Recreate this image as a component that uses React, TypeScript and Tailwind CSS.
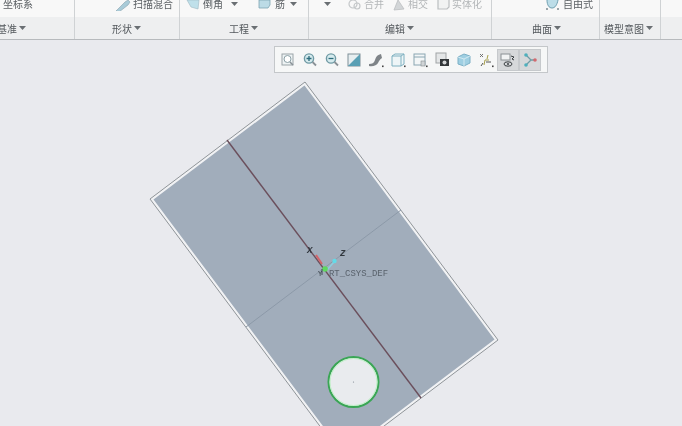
import React from 'react';

const cjk = { fontFamily: '"Noto Sans CJK SC", "Liberation Sans", sans-serif' };

const Caret = ({ className = '' }: { className?: string }) => (
  <svg width="7" height="4" viewBox="0 0 7 4" className={className}>
    <path d="M0 0h7L3.5 4z" fill="#6a6f73" />
  </svg>
);

const GroupLabel = ({ text, pad }: { text: string; pad: string }) => (
  <div className={`flex h-[22px] items-center gap-[2px] text-[10px] text-[#53585c] ${pad}`}>
    <span>{text}</span>
    <Caret />
  </div>
);

const Tool = ({ active, children }: { active?: boolean; children: React.ReactNode }) => (
  <div className={`flex h-[20px] w-[20px] items-center justify-center ${active ? 'bg-[#d6d8da] outline outline-1 outline-[#c6c9cc]' : ''}`}>
    <svg width="18" height="18" viewBox="0 0 18 18" fill="none">
      {children}
    </svg>
  </div>
);

const Magnifier = ({ sign }: { sign: string }) => (
  <>
    <circle cx="8" cy="7.5" r="4.6" fill="#d6ebee" stroke="#6f9aa4" strokeWidth="1.4" />
    <path d="M11.5 11l3.5 3.5" stroke="#8a9297" strokeWidth="1.8" />
    <path d={sign} stroke="#2c6c7c" strokeWidth="1.3" />
  </>
);

const Sub = () => <rect x="15" y="14.5" width="1.6" height="1.6" fill="#444" />;

const App: React.FC = () => {
  return (
    <div className="flex h-[426px] w-[682px] flex-col overflow-hidden bg-[#e9eaee] blur-[0.5px]" style={cjk}>
      {/* Ribbon */}
      <header className="flex h-[40px] shrink-0 border-b border-[#b7babd] bg-[#eeeff0]">
        <section className="w-[75px] border-r border-[#cfd2d4]">
          <div className="flex h-[17px] items-start bg-[#f8f8f8] pl-[3px] text-[10px] leading-[8px] text-[#5b6064]">坐标系</div>
          <GroupLabel text="基准" pad="-ml-[3px]" />
        </section>

        <section className="w-[105px] border-r border-[#cfd2d4]">
          <div className="flex h-[17px] items-start justify-end gap-[2px] overflow-hidden bg-[#f8f8f8] pr-[6px] text-[10px] leading-[8px] text-[#5b6064]">
            <svg width="16" height="11" viewBox="0 0 16 11">
              <path d="M1 11l9-9 3-2 2 2-2 3-9 7z" fill="#a9cbd8" stroke="#8aa3ae" strokeWidth=".6" />
            </svg>
            <span>扫描混合</span>
          </div>
          <GroupLabel text="形状" pad="pl-[37px]" />
        </section>

        <section className="w-[129px] border-r border-[#cfd2d4]">
          <div className="flex h-[17px] items-start overflow-hidden bg-[#f8f8f8] pl-[6px] text-[10px] leading-[8px] text-[#5b6064]">
            <svg width="16" height="10" viewBox="0 0 16 10">
              <path d="M1 0l4 7 7 2 1-9z" fill="#bfe0ea" stroke="#9db8c2" strokeWidth=".6" />
            </svg>
            <span className="ml-[1px]">倒角</span>
            <Caret className="ml-[8px] mt-[2px]" />
            <svg width="14" height="10" viewBox="0 0 14 10" className="ml-[20px]">
              <path d="M1 0v8h9l2-3V0z" fill="#bcdbe6" stroke="#7fa4b2" strokeWidth=".8" />
            </svg>
            <span className="ml-[3px]">筋</span>
            <Caret className="ml-[5px] mt-[2px]" />
          </div>
          <GroupLabel text="工程" pad="pl-[49px]" />
        </section>

        <section className="w-[183px] border-r border-[#cfd2d4]">
          <div className="flex h-[17px] items-start overflow-hidden bg-[#f8f8f8] pl-[15px] text-[10px] leading-[8px] text-[#b3b6b8]">
            <Caret className="mt-[2px]" />
            <svg width="14" height="11" viewBox="0 0 14 11" className="ml-[17px]">
              <circle cx="5" cy="4" r="4" fill="none" stroke="#c4c7c9" strokeWidth="1.2" />
              <circle cx="9" cy="6" r="3" fill="none" stroke="#c4c7c9" strokeWidth="1.2" />
            </svg>
            <span className="ml-[2px]">合并</span>
            <svg width="14" height="11" viewBox="0 0 14 11" className="ml-[8px]">
              <path d="M2 10l4-10 6 9z" fill="#d3d6d8" stroke="#bbbec0" strokeWidth=".8" />
            </svg>
            <span className="ml-[2px]">相交</span>
            <svg width="14" height="11" viewBox="0 0 14 11" className="ml-[9px]">
              <path d="M1 0v9h9l2-2V0" fill="#f1f2f2" stroke="#bbbec0" strokeWidth="1.2" />
            </svg>
            <span className="ml-[1px]">实体化</span>
          </div>
          <GroupLabel text="编辑" pad="pl-[76px]" />
        </section>

        <section className="w-[108px] border-r border-[#cfd2d4]">
          <div className="flex h-[17px] items-start overflow-hidden bg-[#f8f8f8] pl-[53px] text-[10px] leading-[8px] text-[#5b6064]">
            <svg width="15" height="11" viewBox="0 0 15 11">
              <path d="M2 0c0 5 2 8 5 8s5-3 6-8" fill="#bcdde8" stroke="#6e9fb0" strokeWidth="1" />
              <circle cx="2" cy="9" r="1" fill="#7b8a90" />
              <circle cx="13" cy="9" r="1" fill="#7b8a90" />
            </svg>
            <span className="ml-[3px]">自由式</span>
          </div>
          <GroupLabel text="曲面" pad="pl-[40px]" />
        </section>

        <section className="w-[61px] border-r border-[#cfd2d4]">
          <div className="h-[17px] bg-[#f8f8f8]" />
          <GroupLabel text="模型意图" pad="pl-[4px]" />
        </section>

        <section className="flex-1">
          <div className="h-[17px] bg-[#f8f8f8]" />
        </section>
      </header>

      {/* Graphics area */}
      <main className="relative flex-1">
        <svg width="682" height="386" viewBox="0 40 682 386" className="absolute inset-0">
          <polygon points="305,82 498,340 343,457 150,199" fill="#f1f2f4" stroke="#8f9498" strokeWidth="1" />
          <polygon points="304.500,85.500 494.500,339.500 343.500,453.500 153.500,199.500" fill="#a1adbb" />
          <path d="M401 210L246 327" stroke="#8c99a8" strokeWidth="1" />
          <path d="M227 140L421 398" stroke="#6b4f5c" strokeWidth="1.4" />
          <path d="M316 255l6 9" stroke="#d4646a" strokeWidth="2" />
          <path d="M327 270l7-8" stroke="#8ccfe0" strokeWidth="1.4" />
          <circle cx="334.500" cy="261" r="2.2" fill="#62dbe8" />
          <circle cx="325" cy="269" r="2.8" fill="#5fd85f" />
          <path d="M322 269v6" stroke="#3e4b55" strokeWidth="1" />
          <text x="307" y="253" fontSize="9" fontStyle="italic" fontWeight="700" fill="#30363c" fontFamily="Liberation Mono, monospace">X</text>
          <text x="340" y="256" fontSize="9" fontStyle="italic" fontWeight="700" fill="#30363c" fontFamily="Liberation Mono, monospace">Z</text>
          <text x="318" y="276" fontSize="7" fill="#30363c" fontFamily="Liberation Mono, monospace">Y</text>
          <text x="329" y="276" fontSize="9" fill="#59626c" fontFamily="Liberation Mono, monospace" textLength="59" lengthAdjust="spacingAndGlyphs">RT_CSYS_DEF</text>
          <circle cx="353.500" cy="382" r="25" fill="#e9ebee" stroke="#3aa655" strokeWidth="2" />
          <circle cx="353.500" cy="382" r="23.500" fill="none" stroke="#bdf0c4" strokeWidth="1" />
          <circle cx="353.500" cy="382" r=".6" fill="#7b8590" />
        </svg>

        {/* View toolbar */}
        <div className="absolute left-[274px] top-[6px] flex h-[27px] w-[274px] items-center gap-[2px] border border-[#c4c7ca] bg-[#f6f7f7] pl-[3px]">
          <Tool>
            <rect x="3" y="3" width="11" height="11" fill="#eef3f4" stroke="#9aa4a8" />
            <circle cx="8.500" cy="8" r="3.500" fill="#fff" stroke="#8ba0a6" />
            <path d="M11 11l3 3" stroke="#8a9297" strokeWidth="1.5" />
          </Tool>
          <Tool>
            <Magnifier sign="M5.500 7.500h5M8 5v5" />
          </Tool>
          <Tool>
            <Magnifier sign="M5.500 7.500h5" />
          </Tool>
          <Tool>
            <rect x="3" y="3" width="12" height="12" fill="#e7eef0" stroke="#7f9098" />
            <path d="M3 15L15 3v12z" fill="#5aa0b5" />
          </Tool>
          <Tool>
            <path d="M2 13c3 0 5-1 6-4s2-5 6-6l1 4c-2 1-3 3-4 5s-5 4-9 3z" fill="#7f8488" />
            <Sub />
          </Tool>
          <Tool>
            <path d="M3 5l3-2h9v10l-3 2H3z" fill="#eef5f7" stroke="#7fb0c0" />
            <path d="M12 15V5H3M12 5l3-2" stroke="#7fb0c0" fill="none" />
            <Sub />
          </Tool>
          <Tool>
            <rect x="3" y="3" width="11" height="11" fill="#f3f6f7" stroke="#8aa6b2" />
            <path d="M3 6h11" stroke="#8aa6b2" />
            <rect x="10" y="10" width="4" height="5" fill="#d0d4d6" stroke="#868c90" strokeWidth=".6" />
            <Sub />
          </Tool>
          <Tool>
            <rect x="3" y="2" width="10" height="10" fill="#e4e6e7" stroke="#a0a4a6" />
            <rect x="7" y="8" width="9" height="7" fill="#33373a" />
            <circle cx="11.500" cy="11.500" r="2" fill="#d4d6d8" />
          </Tool>
          <Tool>
            <path d="M3 6l6-3 6 2v7l-6 3-6-2z" fill="#9fcfe2" stroke="#7cb0c6" />
            <path d="M9 8l6-3M9 8v7M9 8L3 6" stroke="#dff0f6" strokeWidth=".8" />
          </Tool>
          <Tool>
            <path d="M3 3l3 3M6 3L3 6" stroke="#666" strokeWidth=".9" />
            <path d="M11 4l-1 4M7 14l1-5h4" stroke="#a8a04c" strokeWidth="1" />
            <path d="M4 15l2-3" stroke="#555" strokeWidth="1" />
            <path d="M9 11h5" stroke="#555" strokeWidth="1" />
            <Sub />
          </Tool>
          <Tool active>
            <rect x="2" y="3" width="9" height="6" fill="#f1f3f4" stroke="#8a9094" />
            <path d="M12 5l3 1-2 2 2 1" stroke="#3a3f42" strokeWidth="1" />
            <ellipse cx="9" cy="13" rx="4" ry="2.200" fill="none" stroke="#3a3f42" />
            <circle cx="9" cy="13" r="1" fill="#3a3f42" />
          </Tool>
          <Tool active>
            <path d="M5 4l5 5-5 5M10 9h5" stroke="#6f9ca4" strokeWidth="1.300" />
            <circle cx="5" cy="4" r="1.800" fill="#4fb0bd" />
            <circle cx="5" cy="14" r="1.800" fill="#4fb0bd" />
            <circle cx="14" cy="9" r="1.800" fill="#d2696f" />
          </Tool>
        </div>
      </main>
    </div>
  );
};

export default App;
